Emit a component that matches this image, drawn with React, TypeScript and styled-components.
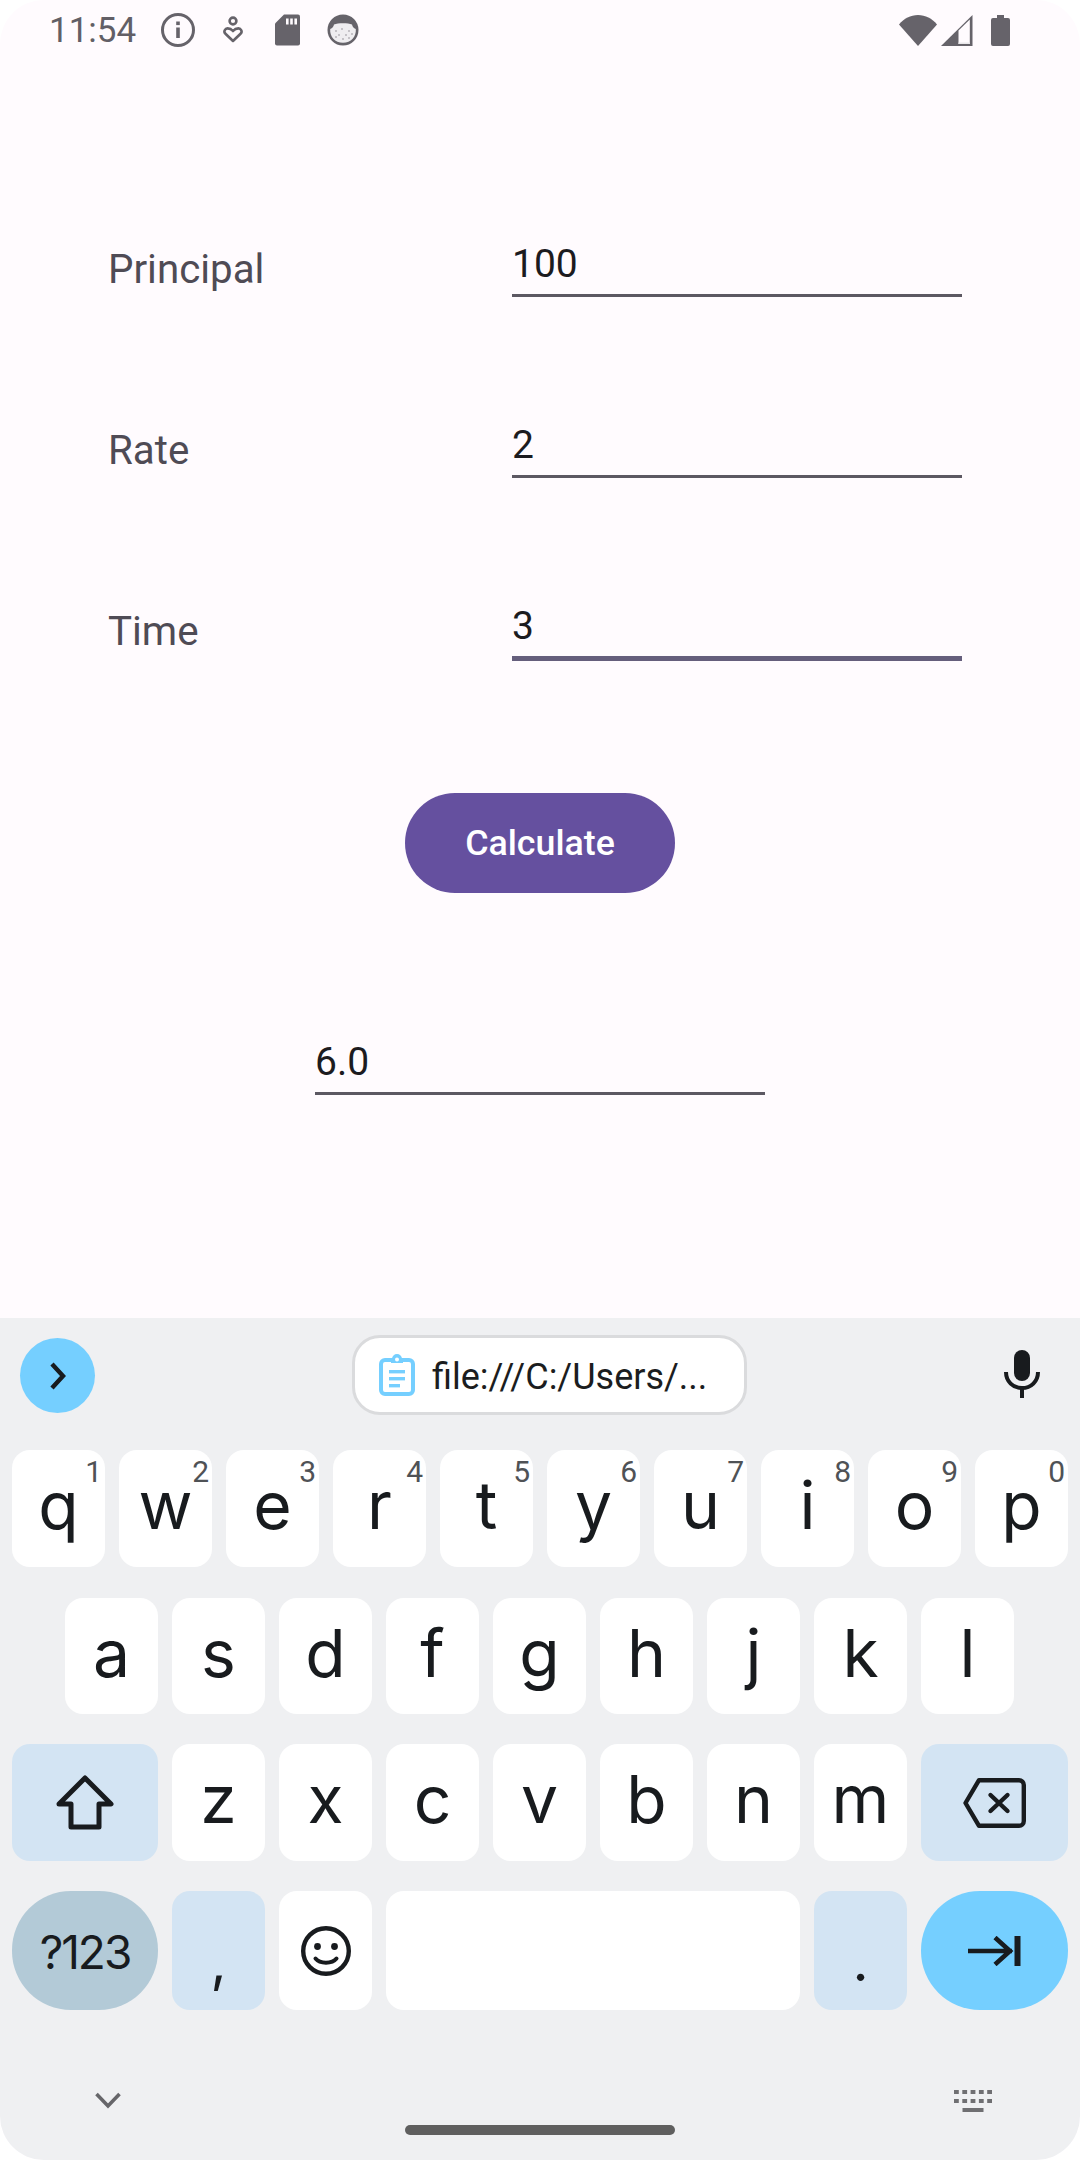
import React from "react";
import styled, { createGlobalStyle } from "styled-components";

const Global = createGlobalStyle`
  html, body { margin: 0; padding: 0; background: #ffffff; }
  * { box-sizing: border-box; }
`;

const Screen = styled.div`
  width: 1080px;
  height: 2160px;
  display: flex;
  flex-direction: column;
  overflow: hidden;
  border-radius: 44px;
  background: #fffbfe;
  font-family: Roboto, "Liberation Sans", sans-serif;
`;

const StatusBar = styled.div`
  height: 60px;
  flex: none;
  display: flex;
  align-items: center;
  padding: 0 70px 0 49px;
  color: #625f66;
`;

const Clock = styled.span`
  font-size: 35px;
  width: 111px;
`;

const StatusGroup = styled.div`
  display: flex;
  align-items: center;
  gap: 27px;
`;

const StatusRight = styled.div`
  margin-left: auto;
  display: flex;
  align-items: center;
  gap: 4px;
`;

const BatterySlot = styled.div`
  display: flex;
  margin-left: 14px;
`;

const Content = styled.main`
  height: 1258px;
  flex: none;
  padding-top: 170px;
  display: flex;
  flex-direction: column;
`;

const FormRow = styled.div`
  display: flex;
  height: 66px;
  margin-bottom: 115px;
  padding-left: 108px;
`;

const Label = styled.div`
  width: 404px;
  flex: none;
  font-size: 40.3px;
  line-height: 80px;
  color: #4f4b55;
`;

const Field = styled.div<{ $focus?: boolean }>`
  width: 450px;
  height: ${(p) => (p.$focus ? 69 : 67)}px;
  flex: none;
  font-size: 39px;
  line-height: 68px;
  color: #1c1b1f;
  border-bottom: ${(p) => (p.$focus ? "5.5px solid #655e7c" : "3px solid #5c5862")};
`;

const ButtonWrap = styled.div`
  display: flex;
  justify-content: center;
  margin-top: 20px;
`;

const CalcButton = styled.button`
  width: 270px;
  height: 100px;
  border: 0;
  border-radius: 50px;
  background: #65509f;
  color: #ffffff;
  font: 500 35.75px Roboto, sans-serif;
`;

const ResultWrap = styled.div`
  display: flex;
  justify-content: center;
  margin-top: 135px;
`;

const Keyboard = styled.section`
  flex: 1;
  background: #eff0f2;
  display: flex;
  flex-direction: column;
`;

const Strip = styled.div`
  height: 132px;
  flex: none;
  display: flex;
  align-items: flex-start;
  padding: 17px 40px 0 20px;
`;

const Circle = styled.div`
  width: 75px;
  height: 75px;
  margin-top: 3px;
  border-radius: 50%;
  background: #75cfff;
  display: flex;
  align-items: center;
  justify-content: center;
`;

const Chip = styled.div`
  width: 395px;
  height: 80px;
  margin-left: 257px;
  border: 3px solid #dadbdd;
  border-radius: 28px;
  background: #ffffff;
  display: flex;
  align-items: center;
  padding-left: 24px;
  gap: 17px;
  font-size: 36px;
  line-height: 46px;
  color: #1b1d20;
`;

const ChipText = styled.span`
  padding-top: 4px;
`;

const MicWrap = styled.div`
  margin-left: auto;
  margin-top: 15px;
  display: flex;
`;

const KeyRows = styled.div`
  display: flex;
  flex-direction: column;
`;

const KeyRow = styled.div<{ $h: number; $mb: number; $inset?: number }>`
  display: flex;
  gap: 14px;
  height: ${(p) => p.$h}px;
  margin-bottom: ${(p) => p.$mb}px;
  padding-left: ${(p) => p.$inset ?? 12}px;
`;

const tones = { plain: "#ffffff", fn: "#d3e4f3", sym: "#b3cad7", go: "#75cfff" };

const Key = styled.div<{ $w?: number; $tone?: keyof typeof tones; $pill?: boolean }>`
  position: relative;
  width: ${(p) => p.$w ?? 93}px;
  flex: none;
  border-radius: ${(p) => (p.$pill ? "59px" : "18px")};
  background: ${(p) => tones[p.$tone ?? "plain"]};
  color: #181b1e;
  display: flex;
  align-items: center;
  justify-content: center;
  font-family: Inter, Roboto, sans-serif;
  font-size: 66px;
`;

const Letter = styled.span`
  margin-bottom: 7px;
`;

const Hint = styled.span`
  position: absolute;
  top: 4px;
  right: 3px;
  font-family: Roboto, sans-serif;
  font-size: 30px;
  line-height: 35px;
  color: #4f5256;
`;

const SymLabel = styled.span`
  font-size: 46px;
  letter-spacing: -2px;
  margin-top: 2px;
`;

const PunctLabel = styled.span`
  font-size: 56px;
  line-height: 60px;
  margin-top: 20px;
`;

const BottomBar = styled.div`
  flex: 1;
  padding-top: 71px;
  display: flex;
  flex-direction: column;
  align-items: center;
`;

const NavIcons = styled.div`
  width: 100%;
  height: 40px;
  padding: 0 88px 0 95px;
  display: flex;
  align-items: center;
  justify-content: space-between;
`;

const Handle = styled.div`
  width: 270px;
  height: 10px;
  margin-top: 4px;
  border-radius: 5px;
  background: #5f5f5f;
`;

const grey = "#66636a";
const ink = "#181b1e";

const InfoIcon = () => (
  <svg width="36" height="36" viewBox="0 0 36 36">
    <circle cx="18" cy="18" r="15.5" fill="none" stroke={grey} strokeWidth="3" />
    <rect x="16.2" y="15.5" width="3.6" height="10.5" fill={grey} />
    <rect x="16.2" y="9.5" width="3.6" height="3.6" fill={grey} />
  </svg>
);

const HeartPersonIcon = () => (
  <svg width="25" height="28" viewBox="0 0 25 28">
    <circle cx="10" cy="5" r="3.4" fill="none" stroke={grey} strokeWidth="2.6" />
    <path d="M10 25 L2.2 17.5 C0.4 15.5 2 12.4 4.6 12.4 C6.8 12.4 8.6 13.4 10 15 C11.4 13.4 13.2 12.4 15.4 12.4 C18 12.4 19.6 15.5 17.8 17.5 Z" fill="none" stroke={grey} strokeWidth="2.6" strokeLinejoin="round" />
  </svg>
);

const SdIcon = () => (
  <svg width="25" height="32" viewBox="0 0 25 32">
    <path d="M9 0.5 H23 a2 2 0 0 1 2 2 V29.5 a2 2 0 0 1 -2 2 H2 a2 2 0 0 1 -2 -2 V9.5 Z" fill={grey} />
    <rect x="11" y="4.5" width="2.6" height="6" fill="#fffbfe" />
    <rect x="15.2" y="4.5" width="2.6" height="6" fill="#fffbfe" />
    <rect x="19.4" y="4.5" width="2.6" height="6" fill="#fffbfe" />
  </svg>
);

const CatIcon = () => (
  <svg width="32" height="32" viewBox="0 0 32 32">
    <circle cx="16" cy="16" r="15.5" fill={grey} />
    <path d="M3.2 15 C5.5 14.5 6.5 12.5 7 10.5 C11 8.8 21 8.8 25 10.5 C25.5 12.5 26.5 14.5 28.8 15 C29.5 22.5 24 28.8 16 28.8 C8 28.8 2.5 22.5 3.2 15 Z" fill="#efedf0" />
    <g fill="#8f8c92">
      <circle cx="9" cy="17" r="0.8" /><circle cx="15" cy="15" r="0.8" /><circle cx="22" cy="17" r="0.8" />
      <circle cx="12" cy="21" r="0.8" /><circle cx="19" cy="21" r="0.8" /><circle cx="25" cy="20" r="0.8" />
      <circle cx="9" cy="23" r="0.8" /><circle cx="16" cy="25" r="0.8" /><circle cx="22" cy="24" r="0.8" />
    </g>
  </svg>
);

const WifiIcon = () => (
  <svg width="38" height="31" viewBox="0 0 38 31">
    <path d="M0 9.5 C5 3.5 11.5 0 19 0 C26.5 0 33 3.5 38 9.5 L19 31 Z" fill={grey} />
  </svg>
);

const SignalIcon = () => (
  <svg width="32" height="31" viewBox="0 0 32 31">
    <path d="M31.5 0 V31 H0 Z" fill={grey} />
    <path d="M17.5 29 V15.5 L28.8 4.5 V29 Z" fill="#fffbfe" />
    <path d="M17.5 27.5 H28.8 V29 H17.5 Z" fill="#e9e7ea" />
  </svg>
);

const BatteryIcon = () => (
  <svg width="19" height="31" viewBox="0 0 19 31">
    <path d="M6 0 H13 V3 H17 a2 2 0 0 1 2 2 V29 a2 2 0 0 1 -2 2 H2 a2 2 0 0 1 -2 -2 V5 a2 2 0 0 1 2 -2 H6 Z" fill={grey} />
  </svg>
);

const ChevronRight = () => (
  <svg width="20" height="30" viewBox="0 0 20 30">
    <path d="M4 3 L15 15 L4 27" fill="none" stroke={ink} strokeWidth="4.4" />
  </svg>
);

const ClipboardIcon = () => (
  <svg width="36" height="42" viewBox="0 0 36 42">
    <rect x="2" y="6" width="32" height="34" rx="4" fill="none" stroke="#75cfff" strokeWidth="4" />
    <path d="M12 5 H13 a5 5 0 0 1 10 0 H24 V9 H12 Z" fill="#75cfff" />
    <circle cx="18" cy="5.5" r="2" fill="#ffffff" />
    <g fill="#75cfff">
      <rect x="10" y="16" width="16" height="3.4" />
      <rect x="10" y="23" width="16" height="3.4" />
      <rect x="10" y="30" width="11" height="3.4" />
    </g>
  </svg>
);

const MicIcon = () => (
  <svg width="36" height="48" viewBox="0 0 36 48">
    <rect x="10" y="0" width="16" height="31" rx="8" fill={ink} />
    <path d="M2 22 C2 31.5 9 38 18 38 C27 38 34 31.5 34 22" fill="none" stroke={ink} strokeWidth="4" />
    <rect x="16" y="37" width="4" height="11" fill={ink} />
  </svg>
);

const ShiftIcon = () => (
  <svg width="58" height="56" viewBox="0 0 58 56">
    <path d="M29 3 L55 29 H43 V52 H15 V29 H3 Z" fill="none" stroke={ink} strokeWidth="5" strokeLinejoin="round" />
  </svg>
);

const BackspaceIcon = () => (
  <svg width="63" height="50" viewBox="0 0 63 50">
    <path d="M16 2.2 H56 a4.8 4.8 0 0 1 4.8 4.8 V43 a4.8 4.8 0 0 1 -4.8 4.8 H16 L2.5 25 Z" fill="none" stroke={ink} strokeWidth="4.4" strokeLinejoin="round" />
    <path d="M27.5 17 L44.5 33 M44.5 17 L27.5 33" fill="none" stroke={ink} strokeWidth="4.4" strokeLinecap="round" />
  </svg>
);

const SmileIcon = () => (
  <svg width="50" height="50" viewBox="0 0 50 50">
    <circle cx="25" cy="25" r="22.8" fill="none" stroke={ink} strokeWidth="4.4" />
    <circle cx="16.5" cy="20.5" r="3.4" fill={ink} />
    <circle cx="33.5" cy="20.5" r="3.4" fill={ink} />
    <path d="M14.5 32.5 C19 38 31 38 35.5 32.5" fill="none" stroke={ink} strokeWidth="4" strokeLinecap="round" />
  </svg>
);

const TabIcon = () => (
  <svg width="53" height="30" viewBox="0 0 53 30">
    <path d="M0 15 H44 M27 1.5 L42 15 L27 28.5" fill="none" stroke={ink} strokeWidth="4.6" />
    <rect x="46.5" y="0" width="6" height="30" fill={ink} />
  </svg>
);

const ChevronDown = () => (
  <svg width="26" height="18" viewBox="0 0 26 18">
    <path d="M1.5 2 L13 14 L24.5 2" fill="none" stroke="#66666a" strokeWidth="3.6" />
  </svg>
);

const KeyboardIcon = () => (
  <svg width="38" height="22" viewBox="0 0 38 22">
    <g fill="#6f6f72">
      {[0, 8.3, 16.6, 24.9, 33.2].map((x) => (
        <React.Fragment key={x}>
          <rect x={x} y="0" width="4.8" height="4" />
          <rect x={x} y="9" width="4.8" height="4" />
        </React.Fragment>
      ))}
      <rect x="8.5" y="18" width="21" height="4" />
    </g>
  </svg>
);

const row1: [string, string][] = [
  ["q", "1"], ["w", "2"], ["e", "3"], ["r", "4"], ["t", "5"],
  ["y", "6"], ["u", "7"], ["i", "8"], ["o", "9"], ["p", "0"],
];

export default function App() {
  return (
    <Screen>
      <Global />
      <StatusBar>
        <Clock>11:54</Clock>
        <StatusGroup>
          <InfoIcon />
          <HeartPersonIcon />
          <SdIcon />
          <CatIcon />
        </StatusGroup>
        <StatusRight>
          <WifiIcon />
          <SignalIcon />
          <BatterySlot><BatteryIcon /></BatterySlot>
        </StatusRight>
      </StatusBar>

      <Content>
        <FormRow>
          <Label>Principal</Label>
          <Field>100</Field>
        </FormRow>
        <FormRow>
          <Label>Rate</Label>
          <Field>2</Field>
        </FormRow>
        <FormRow>
          <Label>Time</Label>
          <Field $focus>3</Field>
        </FormRow>
        <ButtonWrap>
          <CalcButton>Calculate</CalcButton>
        </ButtonWrap>
        <ResultWrap>
          <Field>6.0</Field>
        </ResultWrap>
      </Content>

      <Keyboard>
        <Strip>
          <Circle><ChevronRight /></Circle>
          <Chip><ClipboardIcon /><ChipText>file:///C:/Users/...</ChipText></Chip>
          <MicWrap><MicIcon /></MicWrap>
        </Strip>
        <KeyRows>
          <KeyRow $h={117} $mb={31}>
            {row1.map(([k, n]) => (
              <Key key={k}><Letter>{k}</Letter><Hint>{n}</Hint></Key>
            ))}
          </KeyRow>
          <KeyRow $h={116} $mb={30} $inset={65}>
            {"asdfghjkl".split("").map((k) => <Key key={k}><Letter>{k}</Letter></Key>)}
          </KeyRow>
          <KeyRow $h={117} $mb={30}>
            <Key $w={146} $tone="fn"><ShiftIcon /></Key>
            {"zxcvbnm".split("").map((k) => <Key key={k}><Letter>{k}</Letter></Key>)}
            <Key $w={147} $tone="fn"><BackspaceIcon /></Key>
          </KeyRow>
          <KeyRow $h={119} $mb={0}>
            <Key $w={146} $tone="sym" $pill><SymLabel>?123</SymLabel></Key>
            <Key $tone="fn"><PunctLabel>,</PunctLabel></Key>
            <Key><SmileIcon /></Key>
            <Key $w={414} />
            <Key $tone="fn"><PunctLabel>.</PunctLabel></Key>
            <Key $w={147} $tone="go" $pill><TabIcon /></Key>
          </KeyRow>
        </KeyRows>
        <BottomBar>
          <NavIcons>
            <ChevronDown />
            <KeyboardIcon />
          </NavIcons>
          <Handle />
        </BottomBar>
      </Keyboard>
    </Screen>
  );
}
